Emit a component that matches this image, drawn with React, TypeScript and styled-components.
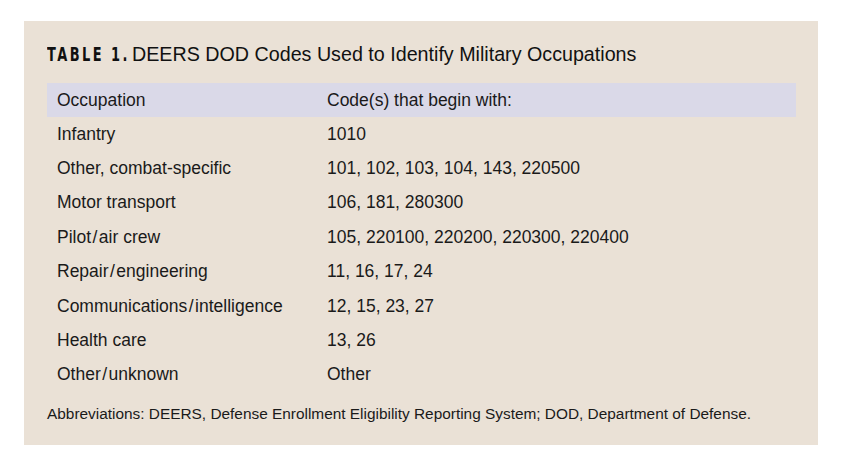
import React from 'react';
import styled, { createGlobalStyle } from 'styled-components';

type Row = {
  occupation: string;
  codes: string;
};

const rows: Row[] = [
  { occupation: 'Infantry', codes: '1010' },
  { occupation: 'Other, combat-specific', codes: '101, 102, 103, 104, 143, 220500' },
  { occupation: 'Motor transport', codes: '106, 181, 280300' },
  { occupation: 'Pilot\u200A/\u200Aair crew', codes: '105, 220100, 220200, 220300, 220400' },
  { occupation: 'Repair\u200A/\u200Aengineering', codes: '11, 16, 17, 24' },
  { occupation: 'Communications\u200A/\u200Aintelligence', codes: '12, 15, 23, 27' },
  { occupation: 'Health care', codes: '13, 26' },
  { occupation: 'Other\u200A/\u200Aunknown', codes: 'Other' },
];

const App = () => {
  return (
    <>
      <GlobalStyle />
      <Panel>
        <Title>
          <TableLabel>TABLE 1.</TableLabel>DEERS DOD Codes Used to Identify Military Occupations
        </Title>
        <Table>
          <thead>
            <HeaderRow>
              <OccupationCell>Occupation</OccupationCell>
              <CodeCell>Code(s) that begin with:</CodeCell>
            </HeaderRow>
          </thead>
          <tbody>
            {rows.map((row) => (
              <BodyRow key={row.occupation}>
                <OccupationCell>{row.occupation}</OccupationCell>
                <CodeCell>{row.codes}</CodeCell>
              </BodyRow>
            ))}
          </tbody>
        </Table>
        <Footnote>
          Abbreviations: DEERS, Defense Enrollment Eligibility Reporting System; DOD, Department of Defense.
        </Footnote>
      </Panel>
    </>
  );
};

export default App;

const GlobalStyle = createGlobalStyle`
  body {
    margin: 0;
    background: #ffffff;
    font-family: 'Liberation Sans', Arial, sans-serif;
    color: #1a1a1a;
  }
`;

const Panel = styled.div`
  margin: 21px 0 0 24px;
  width: 794px;
  height: 424px;
  box-sizing: border-box;
  background-color: #eae1d6;
  padding: 19px 22px 0 23px;
`;

const Title = styled.div`
  font-size: 19.7px;
  line-height: 28px;
  color: #111111;
  margin-bottom: 15px;
  white-space: nowrap;
`;

const TableLabel = styled.span`
  display: inline-block;
  font-family: 'DejaVu Sans Condensed', 'DejaVu Sans', sans-serif;
  font-stretch: condensed;
  font-weight: bold;
  font-size: 20px;
  letter-spacing: 3.4px;
  margin-right: 9px;
  transform: scaleX(0.72);
  transform-origin: left center;
  width: 76px;
`;

const Table = styled.table`
  width: 749px;
  border-collapse: collapse;
  font-size: 17.5px;
  color: #1a1a1a;
`;

const HeaderRow = styled.tr`
  background-color: #dad9e8;
  height: 34px;
`;

const BodyRow = styled.tr`
  height: 34.4px;
`;

const OccupationCell = styled.td`
  width: 270px;
  padding: 0 0 0 10px;
  vertical-align: middle;
`;

const CodeCell = styled.td`
  padding: 0;
  vertical-align: middle;
`;

const Footnote = styled.div`
  margin-top: 13px;
  font-size: 15.4px;
  color: #1a1a1a;
`;
